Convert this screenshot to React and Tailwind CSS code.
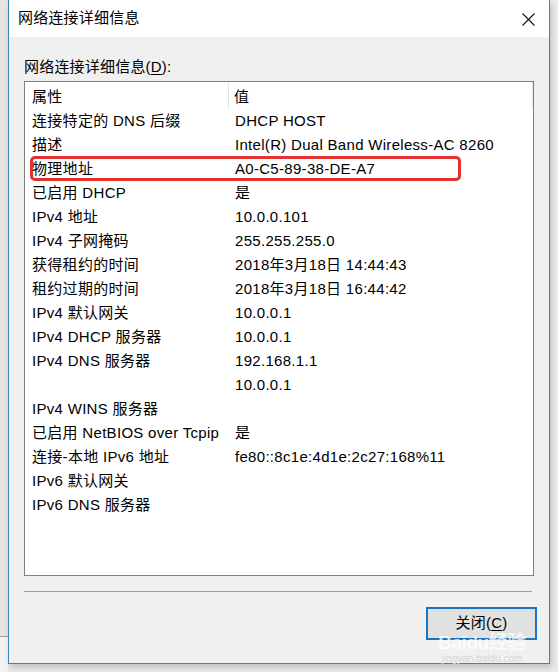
import React from 'react';

const font = { fontFamily: '"Liberation Sans", "Noto Sans CJK SC", sans-serif' };

// 网络连接详细信息 rows
const rows = [
  ['连接特定的 DNS 后缀', 'DHCP HOST'],
  ['描述', 'Intel(R) Dual Band Wireless-AC 8260'],
  ['物理地址', 'A0-C5-89-38-DE-A7'],
  ['已启用 DHCP', '是'],
  ['IPv4 地址', '10.0.0.101'],
  ['IPv4 子网掩码', '255.255.255.0'],
  ['获得租约的时间', '2018年3月18日 14:44:43'],
  ['租约过期的时间', '2018年3月18日 16:44:42'],
  ['IPv4 默认网关', '10.0.0.1'],
  ['IPv4 DHCP 服务器', '10.0.0.1'],
  ['IPv4 DNS 服务器', '192.168.1.1'],
  ['', '10.0.0.1'],
  ['IPv4 WINS 服务器', ''],
  ['已启用 NetBIOS over Tcpip', '是'],
  ['连接-本地 IPv6 地址', 'fe80::8c1e:4d1e:2c27:168%11'],
  ['IPv6 默认网关', ''],
  ['IPv6 DNS 服务器', ''],
];

export default function App() {
  return (
    <div className="w-[558px] h-[672px] bg-[#e9e9e9] flex overflow-hidden text-black" style={font}>
      {/* window behind, left edge */}
      <div className="w-[8px] flex flex-col shrink-0">
        <div className="h-[636px] bg-[#e4e4e4]"></div>
        <div className="h-px bg-[#9a9a9a]"></div>
        <div className="flex-1 bg-[#f2f2f2]"></div>
      </div>

      <div className="flex flex-col shrink-0">
        <div className="w-[542px] h-[664px] border-x border-b border-[#3a86b8] bg-[#f0f0f0] flex flex-col shadow-[2px_3px_6px_rgba(0,0,0,0.18)] relative">
          {/* title bar */}
          <div className="h-[37px] bg-white flex items-center justify-between pl-[9px] pr-[14px]">
            <span className="text-[15px] leading-[20px] mt-[-1px] tracking-[0.2px]">网络连接详细信息</span>
            <svg width="13" height="13" viewBox="0 0 13 13" className="mt-[1px]">
              <path d="M0.5 0.5 L12.5 12.5 M12.5 0.5 L0.5 12.5" stroke="#111" strokeWidth="1.1" fill="none" />
            </svg>
          </div>

          {/* body */}
          <div className="flex-1 flex flex-col pl-[15px] pr-[15px] pt-[20px]">
            <div className="text-[15px] leading-[20px] mb-[4px] tracking-[0.2px]">
              网络连接详细信息(<span className="underline underline-offset-2">D</span>):
            </div>

            <div className="w-[510px] h-[495px] border border-[#7f7f7f] bg-white relative tracking-[0.3px]">
              {/* header */}
              <div className="flex h-[27px] items-center text-[15px]">
                <div className="w-[204px] h-full flex items-center pl-[7px] border-r border-[#e5e5e5] pt-[3px]">属性</div>
                <div className="flex-1 h-full flex items-center pl-[5px] border-r border-[#e9e9e9] pt-[3px]">值</div>
              </div>
              {rows.map(([k, v], i) => (
                <div key={i} className="flex h-[24px] items-center text-[15px] leading-[24px] whitespace-nowrap">
                  <div className="w-[205px] pl-[7px]">{k}</div>
                  <div className="flex-1 pl-[5px]">{v}</div>
                </div>
              ))}

              {/* red highlight */}
              <div className="absolute left-[5px] top-[74px] w-[431px] h-[25px] border-[3px] border-[#e3312f] rounded-[5px]"></div>
            </div>

            <div className="w-[508px] h-px bg-[#a0a0a0] mt-[15px]"></div>

            <div className="flex justify-end mt-[15px] mr-[-3px]">
              <div className="w-[111px] h-[33px] border-2 border-[#1a74c4] bg-[#e1e1e1] flex items-center justify-center text-[15px] tracking-[0.2px]">
                关闭(<span className="underline underline-offset-2">C</span>)
              </div>
            </div>
          </div>

          {/* watermark */}
          <div className="absolute left-[418px] top-[634px] w-[110px] flex flex-col items-center text-white/75 pointer-events-none">
            <span className="text-[19px] leading-[18px] font-bold tracking-tight">Baidu经验</span>
            <span className="text-[10px] leading-[13px] text-[#d8d8d8]">jingyan.baidu.com</span>
          </div>
        </div>
        <div className="flex-1"></div>
      </div>

      <div className="flex-1 bg-[#ebebeb]"></div>
    </div>
  );
}
